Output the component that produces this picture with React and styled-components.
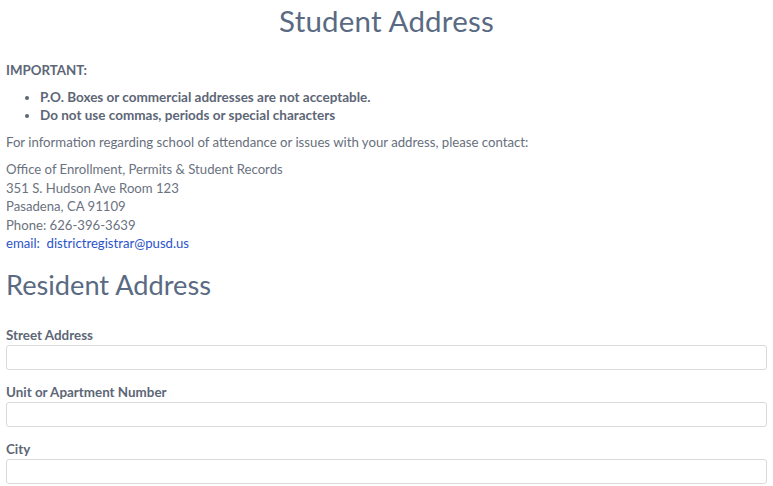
import React from "react";
import styled, { createGlobalStyle } from "styled-components";

const GlobalStyle = createGlobalStyle`
	body {
		margin: 0;
		background: #ffffff;
		font-family: "Lato", "Open Sans", sans-serif;
		color: #5f6878;
	}
`;

const fields = ["Street Address", "Unit or Apartment Number", "City"];

const App = () => {
	return (
		<>
			<GlobalStyle />
			<Page>
				<Title>Student Address</Title>
				<Important>IMPORTANT:</Important>
				<Rules>
					<li>P.O. Boxes or commercial addresses are not acceptable.</li>
					<li>Do not use commas, periods or special characters</li>
				</Rules>
				<Info>
					For information regarding school of attendance or issues with your
					address, please contact:
				</Info>
				<Office>
					<div>Office of Enrollment, Permits &amp; Student Records</div>
					<div>351 S. Hudson Ave Room 123</div>
					<div>Pasadena, CA 91109</div>
					<div>Phone: 626-396-3639</div>
					<Email href="mailto:districtregistrar@pusd.us">
						email:&nbsp; districtregistrar@pusd.us
					</Email>
				</Office>
				<Section>Resident Address</Section>
				<Form>
					{fields.map((name) => (
						<Field key={name}>
							<Label>{name}</Label>
							<Input type="text" />
						</Field>
					))}
				</Form>
			</Page>
		</>
	);
};

export default App;

const Page = styled.div`
	padding: 0 6px;
	display: flex;
	flex-direction: column;
`;

const Title = styled.h1`
	margin: 0;
	font-size: 29.5px;
	line-height: 42px;
	font-weight: 400;
	text-align: center;
	color: #5a6a82;
	letter-spacing: 0.2px;
`;

const Important = styled.div`
	margin-top: 19px;
	font-size: 13.3px;
	line-height: 18px;
	font-weight: 700;
	color: #5d6676;
`;

const Rules = styled.ul`
	margin: 9px 0 0;
	padding-left: 34px;
	font-size: 13.5px;
	line-height: 18px;
	font-weight: 700;
	color: #5d6676;

	li::marker {
		font-size: 13px;
	}
`;

const Info = styled.p`
	margin: 9px 0 0;
	font-size: 13.2px;
	line-height: 18px;
	color: #676f7c;
`;

const Office = styled.div`
	margin-top: 9px;
	font-size: 13.15px;
	line-height: 18.6px;
	color: #6b7280;
	display: flex;
	flex-direction: column;
`;

const Email = styled.a`
	color: #2b54c9;
	text-decoration: none;
`;

const Section = styled.h2`
	margin: 14px 0 0;
	font-size: 27.2px;
	line-height: 36px;
	font-weight: 400;
	color: #5a6a82;
`;

const Form = styled.div`
	margin-top: 23px;
	display: flex;
	flex-direction: column;
	gap: 13px;
`;

const Field = styled.div`
	display: flex;
	flex-direction: column;
	gap: 1px;
`;

const Label = styled.label`
	font-size: 13.4px;
	line-height: 18px;
	font-weight: 700;
	color: #5d6676;
`;

const Input = styled.input`
	box-sizing: border-box;
	width: 100%;
	height: 25px;
	margin: 0;
	border: 1px solid #dadada;
	border-radius: 3px;
	background: #ffffff;
	outline: none;
	font-family: inherit;
	font-size: 13px;
	padding: 0 8px;
`;
